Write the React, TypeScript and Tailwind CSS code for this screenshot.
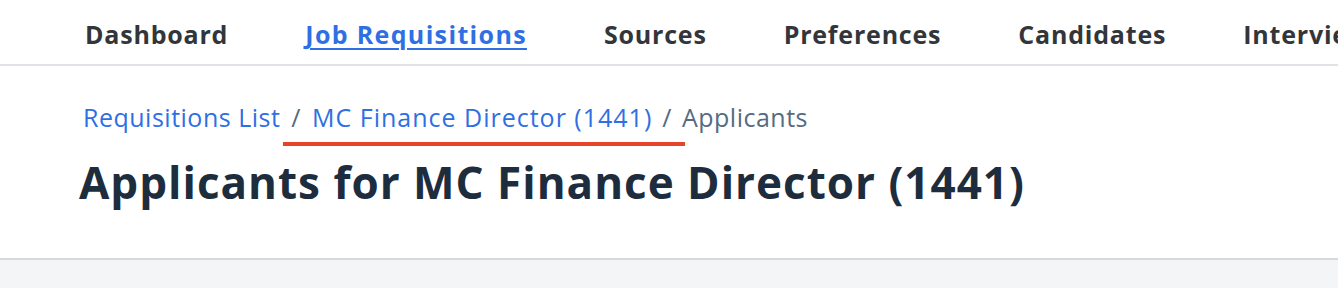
import React from "react";

const navItems = ["Dashboard", "Job Requisitions", "Sources", "Preferences", "Candidates", "Interviews", "Offers", "Reports"];

export default function App() {
  return (
    <div className="w-[1338px] h-[288px] overflow-hidden bg-[#f4f5f7]" style={{ fontFamily: '"Open Sans", "Noto Sans", Arial, sans-serif' }}>
      <nav className="h-[66px] bg-white border-b-2 border-[#dfe3e8] flex items-center pl-[85px] gap-[77px] whitespace-nowrap overflow-hidden">
        {navItems.map((item, i) => (
          <a
            key={item}
            className={
              i === 1
                ? "text-[25px] tracking-[1.35px] font-bold text-[#2f6fe3] underline underline-offset-[4px] decoration-2 shrink-0 pt-[6px]"
                : "text-[25px] tracking-[0.8px] font-bold text-[#32363a] shrink-0 pt-[6px]"
            }
          >
            {item}
          </a>
        ))}
      </nav>
      <section className="h-[194px] bg-white border-b-2 border-[#d9d9d9] pl-[79px] pt-[34px]">
        <div className="flex items-center text-[25px] tracking-[0.5px] text-[#556b82] whitespace-nowrap pl-[4px] h-[36px]">
          <a className="text-[#2f6fe3]">Requisitions List</a>
          <span className="mx-[11px]">/</span>
          <span className="relative">
            <a className="text-[#2f6fe3] tracking-[1px]">MC Finance Director (1441)</a>
            <span className="absolute left-[-29px] right-[-33px] top-[43px] h-[4px] bg-[#e8432a]" />
          </span>
          <span className="mx-[10px]">/</span>
          <span>Applicants</span>
        </div>
        <h1 className="mt-[20px] text-[44px] tracking-[1px] leading-[52px] font-bold text-[#1d2d3e] whitespace-nowrap">
          Applicants for MC Finance Director (1441)
        </h1>
      </section>
    </div>
  );
}
